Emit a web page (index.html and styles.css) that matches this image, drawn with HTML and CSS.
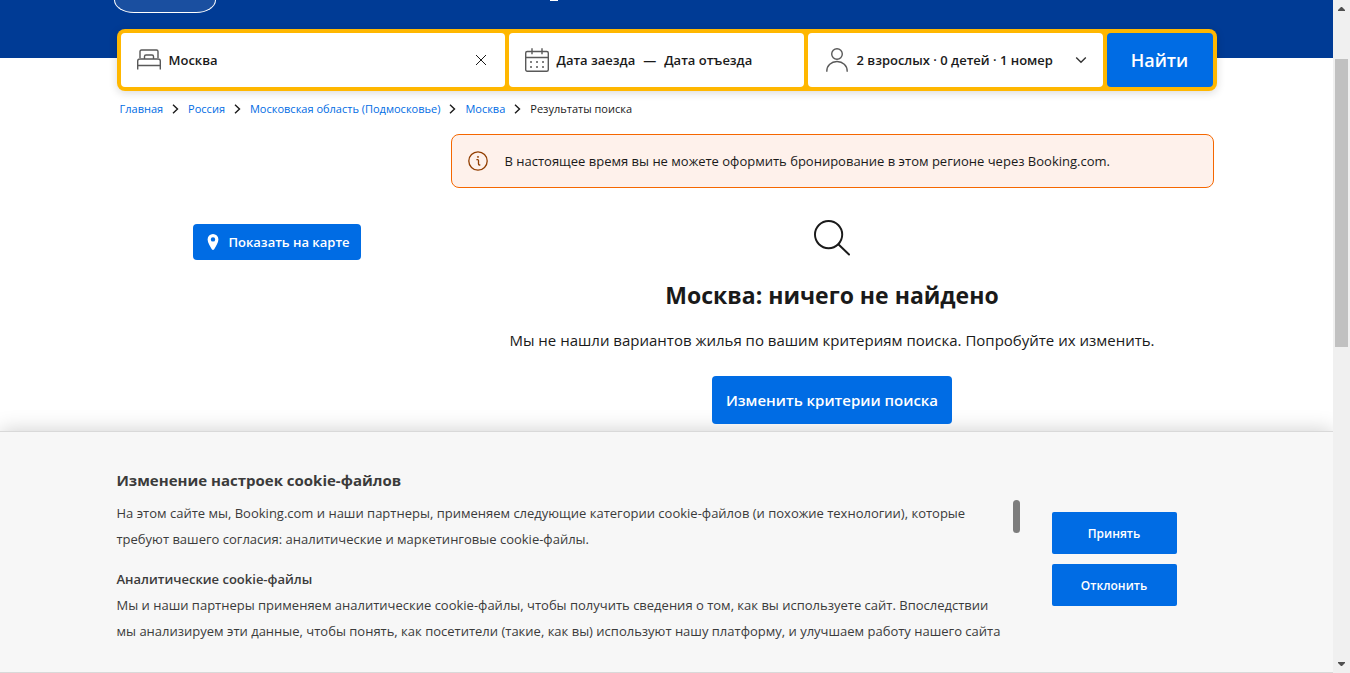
FILE: index.html
```html
<!DOCTYPE html>
<html lang="ru">
<head>
<meta charset="utf-8">
<title>Москва: результаты поиска</title>
<link rel="stylesheet" href="styles.css">
</head>
<body>
<div class="page">
  <header class="header">
    <div class="container">
      <div class="nav-pill"></div>
      <span class="nav-mark"></span>
    </div>
  </header>

  <div class="container">
    <form class="search">
      <div class="search-cell search-place">
        <svg class="icon-bed" width="24" height="22" viewBox="0 0 24 22" fill="none" stroke="#595959" stroke-width="1.4" aria-hidden="true">
          <path d="M3 9V2.5Q3 1 4.500 1h15Q21 1 21 2.500V9M.7 20.500V12Q.7 10 3 10h18q2.300 0 2.300 2v8.500M.7 16.500h22.600M7.500 9.500V7.500q0-1.500 1.500-1.500h6q1.500 0 1.500 1.500v2"/>
        </svg>
        <input class="place-input" type="text" value="Москва" aria-label="Куда вы хотите поехать?">
        <button class="clear" type="button" aria-label="Очистить">
          <svg width="12" height="12" viewBox="0 0 12 12" stroke="#1a1a1a" stroke-width="1"><path d="M1 1l10 10M11 1L1 11"/></svg>
        </button>
      </div>
      <div class="search-cell search-dates">
        <svg class="icon-calendar" width="24" height="24" viewBox="0 0 24 24" fill="none" stroke="#595959" stroke-width="1.400" aria-hidden="true">
          <rect x=".7" y="3.500" width="22.600" height="19.800" rx="1.500"/>
          <path d="M.7 9.500h22.600M7 .2v6M17 .2v6"/>
          <path stroke-width="2" stroke-linecap="round" d="M6 14h.01M12 14h.01M18 14h.01M6 19h.01M12 19h.01M18 19h.01"/>
        </svg>
        <button class="field" type="button">Дата заезда</button>
        <span class="dash">—</span>
        <button class="field" type="button">Дата отъезда</button>
      </div>
      <button class="search-cell search-guests" type="button">
        <svg class="icon-person" width="22" height="24" viewBox="0 0 22 24" fill="none" stroke="#595959" stroke-width="1.400" aria-hidden="true">
          <circle cx="11" cy="6" r="5.300"/>
          <path d="M.8 23.800v-.6C.8 17.500 5.200 13.500 11 13.500s10.200 4 10.200 9.700v.6"/>
        </svg>
        <span>2 взрослых · 0 детей · 1 номер</span>
        <svg class="icon-chevron" width="12" height="8" viewBox="0 0 12 8" fill="none" stroke="#333" stroke-width="1.400" aria-hidden="true"><path d="M1.200 1.500L6 6.200l4.800-4.700"/></svg>
      </button>
      <button class="submit" type="button">Найти</button>
    </form>

    <nav class="crumbs" aria-label="Навигация">
      <a href="#">Главная</a>
      <svg width="7" height="10" viewBox="0 0 7 10"><path d="M1 .8L5.500 5 1 9.200"/></svg>
      <a href="#">Россия</a>
      <svg width="7" height="10" viewBox="0 0 7 10"><path d="M1 .8L5.500 5 1 9.200"/></svg>
      <a href="#">Московская область (Подмосковье)</a>
      <svg width="7" height="10" viewBox="0 0 7 10"><path d="M1 .8L5.500 5 1 9.200"/></svg>
      <a href="#">Москва</a>
      <svg width="7" height="10" viewBox="0 0 7 10"><path d="M1 .8L5.500 5 1 9.200"/></svg>
      <span>Результаты поиска</span>
    </nav>

    <main class="content">
      <aside class="side">
        <button class="btn btn-map" type="button">
          <svg width="12" height="16" viewBox="0 0 12 16" aria-hidden="true"><path fill="#fff" fill-rule="evenodd" d="M6 0a5.400 5.400 0 0 1 5.400 5.400C11.400 8.600 8.700 12.200 7.200 15.200Q6 16.600 4.800 15.200C3.300 12.200.6 8.600.6 5.400A5.400 5.400 0 0 1 6 0zm0 3.200a2.200 2.200 0 1 0 0 4.400 2.200 2.200 0 0 0 0-4.400z"/></svg>
          Показать на карте
        </button>
      </aside>
      <section class="results">
        <div class="alert">
          <svg width="20" height="20" viewBox="0 0 20 20" fill="none" stroke="#923e01" stroke-width="1.300" aria-hidden="true">
            <circle cx="10" cy="10" r="9.200"/>
            <path d="M8.400 8.600h1.200q.9 0 .9.900v3.500q0 1 1 1h.8"/>
            <circle cx="10" cy="5.900" r=".6" fill="#923e01" stroke-width=".7"/>
          </svg>
          <p>В настоящее время вы не можете оформить бронирование в этом регионе через Booking.com.</p>
        </div>
        <div class="empty">
          <svg width="36" height="36" viewBox="0 0 37 37" fill="none" stroke="#1a1a1a" stroke-width="2" stroke-linecap="round" aria-hidden="true">
            <circle cx="15" cy="15" r="14"/><path d="M25 25l11 10.500"/>
          </svg>
          <h1>Москва: ничего не найдено</h1>
          <p>Мы не нашли вариантов жилья по вашим критериям поиска. Попробуйте их изменить.</p>
          <button class="btn btn-change" type="button">Изменить критерии поиска</button>
        </div>
      </section>
    </main>
  </div>

  <section class="cookies" aria-label="Cookie-файлы">
    <div class="container cookies-row">
      <div class="cookies-text">
        <h2>Изменение настроек cookie-файлов</h2>
        <div class="cookies-scroll">
          <div class="cookies-body">
            <p>На этом сайте мы, Booking.com и наши партнеры, применяем следующие категории cookie-файлов (и похожие технологии), которые<br>требуют вашего согласия: аналитические и маркетинговые cookie-файлы.</p>
            <h3>Аналитические cookie-файлы</h3>
            <p>Мы и наши партнеры применяем аналитические cookie-файлы, чтобы получить сведения о том, как вы используете сайт. Впоследствии<br>мы анализируем эти данные, чтобы понять, как посетители (такие, как вы) используют нашу платформу, и улучшаем работу нашего сайта</p>
          </div>
          <div class="cookies-thumb"></div>
        </div>
      </div>
      <div class="cookies-actions">
        <button type="button">Принять</button>
        <button type="button">Отклонить</button>
      </div>
    </div>
  </section>
</div>
<div class="scrollbar" aria-hidden="true">
  <svg width="7" height="4" viewBox="0 0 7 4"><path fill="#505050" d="M3 0h1l3 3v1H0V3z"/></svg>
  <div class="scroll-track"><div class="scroll-thumb"></div></div>
  <svg width="7" height="4" viewBox="0 0 7 4"><path fill="#505050" d="M0 0h7v1L4 4H3L0 1z"/></svg>
</div>
</body>
</html>
```
FILE: styles.css
```css
* { box-sizing: border-box; }

body {
  margin: 0;
  display: flex;
  min-height: 100vh;
  font-family: "Segoe UI", "Open Sans", "Noto Sans", sans-serif;
  font-size: 13px;
  color: #1a1a1a;
  background: #fff;
}

h1, h2, h3, p { margin: 0; }

button, input { font: inherit; color: inherit; }

button {
  border: 0;
  padding: 0;
  background: none;
  cursor: pointer;
  white-space: nowrap;
}

svg { display: block; flex: none; }

.page {
  flex: 1;
  min-width: 0;
  display: flex;
  flex-direction: column;
}

.container {
  width: 100%;
  max-width: 1100px;
  margin: 0 auto;
  position: relative;
}

.header {
  height: 58px;
  background: #003b95;
}

.nav-pill {
  width: 102px;
  height: 13px;
  margin-left: -3px;
  border: 1px solid #fff;
  border-top: 0;
  border-radius: 0 0 20px 20px / 0 0 13px 13px;
  background: #1a4fa0;
}

.nav-mark {
  position: absolute;
  top: 0;
  left: 433px;
  width: 8px;
  height: 1px;
  background: #fff;
}

.search {
  display: grid;
  grid-template-columns: 384fr 295fr 295fr 106fr;
  gap: 4px;
  margin-top: -29px;
  padding: 4px;
  border-radius: 8px;
  background: #ffb700;
  box-shadow: 0 2px 8px rgba(26, 26, 26, .16);
  font-size: 13px;
  font-weight: 600;
}

.search-cell {
  display: flex;
  align-items: center;
  height: 54px;
  padding: 0 16px;
  border-radius: 4px;
  background: #fff;
}

.place-input {
  flex: 1;
  min-width: 0;
  padding: 0 8px;
  border: 0;
  outline: 0;
}

.clear { padding: 2px; }

.search-dates { gap: 8px; }

.search-guests { gap: 9px; padding: 0 16px 0 18px; }

.icon-chevron { margin-left: auto; }

.submit {
  border-radius: 4px;
  background: #006ce4;
  color: #fff;
  font-size: 18px;
}

.crumbs {
  display: flex;
  align-items: center;
  gap: 9px;
  padding: 8px 3px;
  font-size: 11px;
  line-height: 20px;
}

.crumbs a { color: #006ce4; text-decoration: none; }

.crumbs path { fill: none; stroke: #1a1a1a; stroke-width: 1.4; }

.content {
  display: grid;
  grid-template-columns: 321px 1fr;
  gap: 13px;
  padding: 7px 3px 7px 0;
}

.side {
  display: flex;
  justify-content: center;
  align-items: flex-start;
  padding: 90px 0 0;
}

.btn {
  display: flex;
  align-items: center;
  justify-content: center;
  border-radius: 4px;
  background: #006ce4;
  color: #fff;
  font-weight: 600;
}

.btn-map {
  gap: 9px;
  height: 36px;
  padding: 0 11px 0 14px;
  font-size: 13px;
}

.alert {
  display: flex;
  align-items: center;
  gap: 17px;
  height: 54px;
  padding: 0 16px;
  border: 1px solid #f56700;
  border-radius: 8px;
  background: #fef1eb;
  font-size: 13px;
}

.empty {
  display: flex;
  flex-direction: column;
  align-items: center;
  padding-top: 32px;
}

.empty h1 {
  margin-top: 23px;
  font-size: 23px;
  line-height: 32px;
  font-weight: 700;
}

.empty p {
  margin-top: 17px;
  font-size: 15px;
  line-height: 24px;
}

.btn-change {
  height: 48px;
  margin-top: 24px;
  padding: 0 14px;
  font-size: 15px;
}

.cookies {
  flex: 1;
  padding: 36px 0 28px;
  border-top: 1px solid #d9d9d9;
  border-bottom: 1px solid #d9d9d9;
  background: #f7f7f7;
  box-shadow: 0 0 20px rgba(0, 0, 0, .2);
  color: #3b3b3b;
}

.cookies-row {
  display: flex;
  align-items: flex-start;
  gap: 32px;
}

.cookies-text { width: 903px; }

.cookies h2 {
  font-size: 15px;
  line-height: 24px;
  font-weight: 700;
}

.cookies-scroll {
  display: flex;
  justify-content: space-between;
  padding-top: 8px;
}

.cookies-body {
  font-size: 13px;
  line-height: 26px;
  white-space: nowrap;
}

.cookies h3 {
  margin-top: 14px;
  font-size: 13px;
  font-weight: 600;
}

.cookies-thumb {
  flex: none;
  width: 7px;
  height: 33px;
  border-radius: 4px;
  background: #7d7d7d;
}

.cookies-actions {
  display: flex;
  flex-direction: column;
  gap: 10px;
  width: 125px;
  padding-top: 44px;
}

.cookies-actions button {
  height: 42px;
  border-radius: 2px;
  background: #006ce4;
  color: #fff;
  font-size: 12px;
  font-weight: 600;
}

.scrollbar {
  flex: none;
  display: flex;
  flex-direction: column;
  align-items: center;
  width: 17px;
  padding: 7px 0;
  background: #f0f0f0;
}

.scroll-track {
  flex: 1;
  align-self: stretch;
  padding: 48px 2px 0;
}

.scroll-thumb {
  height: 288px;
  background: #c1c1c1;
}
```
